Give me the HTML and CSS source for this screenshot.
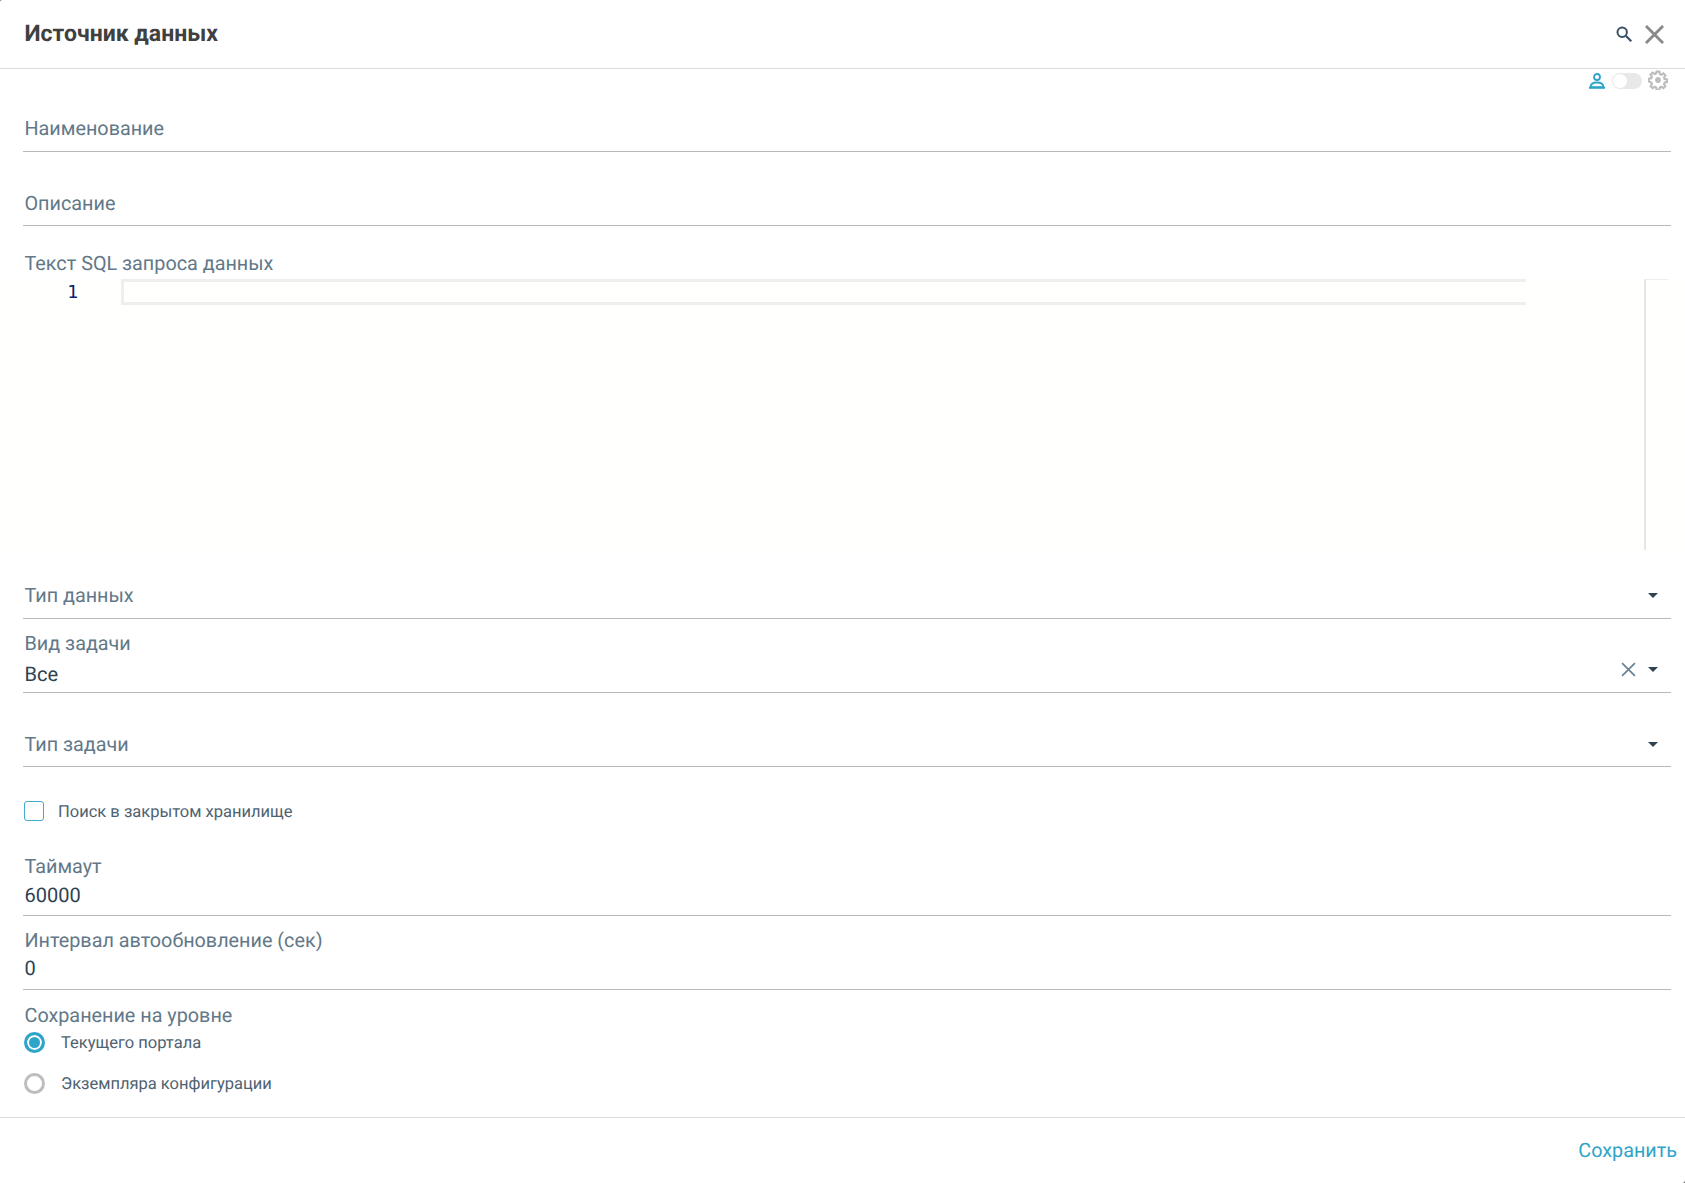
FILE: index.html
```html
<!DOCTYPE html>
<html lang="ru">
<head>
<meta charset="utf-8">
<title>Источник данных</title>
<link rel="stylesheet" href="styles.css">
</head>
<body>
<div class="dialog">
  <header class="head">
    <h1 class="title">Источник данных</h1>
    <div class="head-icons">
      <svg class="ic-search" viewBox="0 0 16 16"><circle cx="6.2" cy="6.200" r="4.700" fill="none" stroke="#3a5064" stroke-width="2"/><path d="M9.800 9.800l5.500 5.500" stroke="#3a5064" stroke-width="2.200" fill="none"/></svg>
      <svg class="ic-close" viewBox="0 0 20 20"><path d="M1 1l18 18M19 1L1 19" stroke="#8a8a8a" stroke-width="3" fill="none"/></svg>
    </div>
  </header>
  <div class="tools">
    <svg class="ic-user" viewBox="0 0 16 16"><circle cx="8" cy="4" r="3" fill="none" stroke="#2fa4c9" stroke-width="1.800"/><path d="M1.500 14.200c0-3 2.600-4.700 6.500-4.700s6.500 1.700 6.500 4.700z" fill="none" stroke="#2fa4c9" stroke-width="1.800"/><path d="M0 14.800h16" stroke="#2fa4c9" stroke-width="2"/></svg>
    <span class="toggle"><span class="knob"></span></span>
    <svg class="ic-gear" viewBox="0 0 24 24"><path fill="none" stroke="#bdbdbd" stroke-width="2.600" d="M10.300 2h3.400l.5 2.900 1.900.8 2.400-1.700 2.400 2.400-1.700 2.400.8 1.900 2.900.5v3.400l-2.900.5-.8 1.900 1.700 2.400-2.400 2.400-2.400-1.700-1.900.8-.5 2.900h-3.400l-.5-2.900-1.900-.8-2.400 1.700-2.400-2.400 1.700-2.400-.8-1.900L1 13.700v-3.400l2.900-.5.800-1.900L3 5.500l2.400-2.400 2.400 1.700 1.900-.8z"/><circle cx="12" cy="12" r="3.500" fill="#bdbdbd"/></svg>
  </div>
  <main class="form">
    <div class="field f-name"><span class="label">Наименование</span></div>
    <div class="field f-desc"><span class="label">Описание</span></div>
    <div class="sql">
      <span class="label">Текст SQL запроса данных</span>
      <div class="editor">
        <span class="gutter">1</span>
        <div class="cur-line"></div>
        <div class="minimap"></div>
      </div>
    </div>
    <div class="field f-type"><span class="label">Тип данных</span><span class="caret"></span></div>
    <div class="field f-kind">
      <span class="label">Вид задачи</span>
      <span class="value">Все</span>
      <svg class="ic-clear" viewBox="0 0 14 14"><path d="M1 1l12 12M13 1L1 13" stroke="#6b8294" stroke-width="1.600" fill="none"/></svg>
      <span class="caret"></span>
    </div>
    <div class="field f-task"><span class="label">Тип задачи</span><span class="caret"></span></div>
    <label class="check"><span class="box"></span><span class="opt">Поиск в закрытом хранилище</span></label>
    <div class="field f-time"><span class="label">Таймаут</span><span class="value">60000</span></div>
    <div class="field f-int"><span class="label">Интервал автообновление (сек)</span><span class="value">0</span></div>
    <div class="levels">
      <span class="label">Сохранение на уровне</span>
      <div class="radio"><span class="dot on"></span><span class="opt">Текущего портала</span></div>
      <div class="radio"><span class="dot"></span><span class="opt">Экземпляра конфигурации</span></div>
    </div>
  </main>
  <footer class="foot"><button class="save">Сохранить</button></footer>
</div>
</body>
</html>
```
FILE: styles.css
```css
* { box-sizing: border-box; }
html, body { margin: 0; height: 100%; background: #666; }
body { font-family: Roboto, "Noto Sans", sans-serif; color: #2f4252; overflow: hidden; text-rendering: geometricPrecision; }
.dialog { width: 1685px; height: 1183px; display: flex; flex-direction: column; background: #fff; border-radius: 2px 0 3px 0; }

.head { height: 69px; flex: none; border-bottom: 1px solid #dcdcdc; display: flex; align-items: center; justify-content: space-between; padding: 0 21px 0 24px; }
.title { margin: 0 0 0 .5px; font-size: 23px; line-height: 30px; font-weight: 700; color: #404040; }
.head-icons { display: flex; align-items: center; gap: 13px; }
.ic-search { width: 16px; height: 16px; }
.ic-close { width: 19px; height: 19px; }

.tools { height: 14px; flex: none; display: flex; justify-content: flex-end; align-items: flex-start; gap: 6px; padding-right: 17px; }
.ic-user { width: 16px; height: 16px; margin-top: 4px; margin-right: 1px; }
.toggle { width: 30px; height: 16px; border-radius: 8px; background: #e8e8e8; margin-top: 4px; padding: 1px; }
.knob { display: block; width: 14px; height: 14px; border-radius: 50%; background: #fff; }
.ic-gear { width: 20px; height: 20px; margin-top: 1px; }

.form { flex: 1; padding: 0 14px 0 24px; display: flex; flex-direction: column; }
.label { font-size: 19.800px; line-height: 26px; margin-bottom: -2px; color: #627888; display: block; white-space: nowrap; margin-left: .5px; }
.value { font-size: 20px; line-height: 24px; color: #2f4252; display: block; margin-left: .5px; }
.field { position: relative; margin-left: -1px; padding-left: 1px; border-bottom: 1px solid #b9b9b9; flex: none; }
.f-name { height: 69px; padding-top: 33px; }
.f-desc { height: 74px; padding-top: 39px; }
.sql { height: 325px; flex: none; padding-top: 25px; position: relative; }
.editor { height: 271px; margin-top: 4px; margin-left: -24px; margin-right: -14px; background: #fffffd; position: relative; display: flex; }
.gutter { width: 78px; flex: none; text-align: right; font-family: "DejaVu Sans Mono", monospace; font-size: 18px; line-height: 26px; padding-top: 1px; color: #0b216f; }
.cur-line { width: 1405px; height: 26px; margin-left: 43px; border: 3px solid #eeeeee; border-right: 0; }
.minimap { position: absolute; left: 1644px; top: 0; width: 24px; bottom: 0; border-left: 2px solid #e6e6e6; border-top: 1px solid #eeeeee; }

.f-type { height: 75px; margin-top: -7px; padding-top: 39px; }
.f-kind { height: 74px; padding-top: 12px; }
.f-kind .value { margin-top: 7px; }
.f-task { height: 74px; padding-top: 39px; }
.caret { position: absolute; right: 13px; top: 49px; width: 0; height: 0; border-left: 5px solid transparent; border-right: 5px solid transparent; border-top: 5px solid #2f4252; }
.f-kind .caret { top: 48px; }
.ic-clear { position: absolute; right: 35px; top: 43px; width: 15px; height: 15px; }

.check { height: 90px; flex: none; display: flex; align-items: center; gap: 14px; font-size: 16.500px; color: #4e6270; padding-bottom: 2px; }
.box { width: 20px; height: 20px; border: 1.500px solid #45a9cc; border-radius: 3px; flex: none; }
.opt { padding-top: 2px; }
.f-time { height: 64px; margin-top: -5px; padding-top: 2px; }
.f-int { height: 74px; padding-top: 12px; }
.f-time .value { margin-top: 5px; }
.f-int .value { margin-top: 4px; }
.levels { padding-top: 13px; }
.levels .label { margin-bottom: -7px; }
.radio { display: flex; align-items: center; gap: 16px; height: 41px; font-size: 16.500px; color: #4e6270; }
.dot { width: 21px; height: 21px; border-radius: 50%; border: 3px solid #bdbdbd; flex: none; background: #fff; }
.dot.on { border-color: #2fa4c9; background: #2fa4c9; box-shadow: inset 0 0 0 2px #fff; }

.foot { height: 66px; flex: none; border-top: 1px solid #dcdcdc; display: flex; align-items: center; justify-content: flex-end; padding: 0 8px 0 0; }
.save { border: 0; background: none; padding: 0; font: 400 19.800px/24px Roboto, sans-serif; color: #2fa4c9; text-rendering: geometricPrecision; }
```
